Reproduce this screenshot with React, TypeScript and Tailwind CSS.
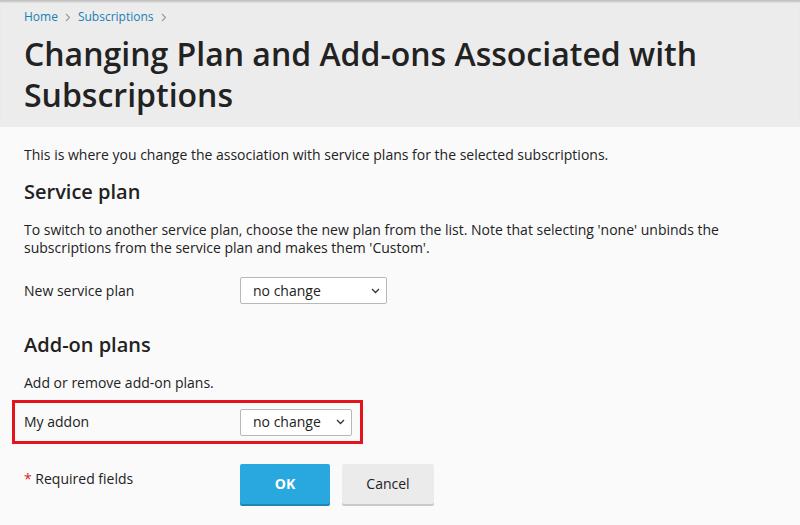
import React from "react";

function Chevron() {
  return (
    <svg width="6" height="9" viewBox="0 0 6 9" className="mx-[7px] text-[#9a9a9a]">
      <path d="M1 1l3.5 3.5L1 8" fill="none" stroke="currentColor" strokeWidth="1.1" />
    </svg>
  );
}

function Select({ width }: { width: string }) {
  return (
    <div
      className={`flex h-[27px] items-center justify-between rounded-[2px] border border-[#b8b8b8] bg-white pl-[12px] pr-[6px] text-[14px] text-[#222] ${width}`}
    >
      <span>no change</span>
      <svg width="9" height="6" viewBox="0 0 9 6">
        <path d="M1 1l3.5 3.5L8 1" fill="none" stroke="#333" strokeWidth="1.3" />
      </svg>
    </div>
  );
}

export default function App() {
  return (
    <div
      className="min-h-[525px] w-[800px] bg-[#fafafa] text-[#222]"
      style={{ fontFamily: '"Open Sans", "Liberation Sans", sans-serif' }}
    >
      {/* page header */}
      <div className="h-[127px] bg-[#ececec] px-[24px] pt-[8px] shadow-[inset_0_3px_2px_-1px_rgba(0,0,0,0.18)]">
        <div className="flex h-[18px] items-center text-[12px] text-[#1a7fb5]">
          <span>Home</span>
          <Chevron />
          <span>Subscriptions</span>
          <Chevron />
        </div>
        <h1 className="mt-[7px] text-[32px] font-semibold leading-[41px] text-[#222]">
          Changing Plan and Add-ons Associated with Subscriptions
        </h1>
      </div>

      <div className="px-[24px] pt-[19px] text-[14px] leading-[18px]">
        <p>This is where you change the association with service plans for the selected subscriptions.</p>

        <h2 className="mt-[14px] text-[20px] font-semibold leading-[28px]">Service plan</h2>
        <p className="mt-[15px] pr-[40px]">
          To switch to another service plan, choose the new plan from the list. Note that selecting 'none' unbinds the
          subscriptions from the service plan and makes them 'Custom'.
        </p>

        <div className="mt-[20px] flex items-center">
          <div className="w-[216px]">New service plan</div>
          <Select width="w-[147px]" />
        </div>

        <h2 className="mt-[27px] text-[20px] font-semibold leading-[28px]">Add-on plans</h2>
        <p className="mt-[15px]">Add or remove add-on plans.</p>

        <div className="-mx-[12px] mt-[8px] flex h-[44px] w-[351px] items-center border-[3px] border-[#e3141c] pl-[9px]">
          <div className="w-[216px]">My addon</div>
          <Select width="w-[112px]" />
        </div>

        <div className="mt-[20px] flex items-start">
          <div className="w-[216px] pt-[6px]">
            <span className="text-[#d8232a]">*</span> Required fields
          </div>
          <button className="h-[40px] w-[90px] rounded-[2px] bg-[#28a8de] text-[14px] font-bold text-white shadow-[0_2px_0_#1d86b5]">
            OK
          </button>
          <button className="ml-[12px] h-[40px] w-[92px] rounded-[2px] bg-[#ebebeb] text-[14px] text-[#222] shadow-[0_2px_0_#c9c9c9]">
            Cancel
          </button>
        </div>
      </div>
    </div>
  );
}
